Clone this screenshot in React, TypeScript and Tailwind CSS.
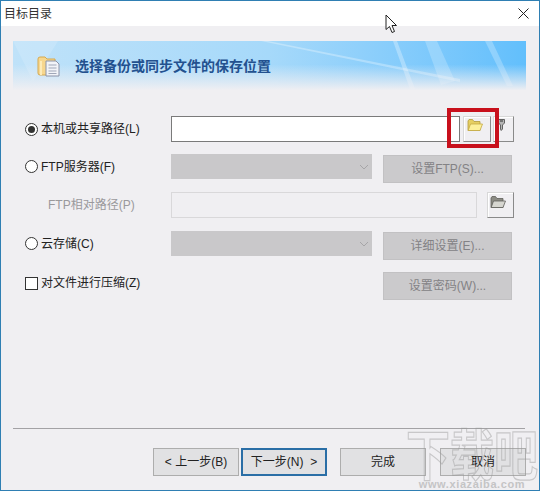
import React from "react";

const font = { fontFamily: '"Liberation Sans", "Noto Sans CJK SC", sans-serif' };

const FolderIcon = ({ gray }: { gray?: boolean }) => (
  <svg width="16" height="14" viewBox="0 0 16 14">
    <path d="M1 3 L1 12.5 L13 12.5 L13 3.5 L7 3.5 L5.5 1.5 L2 1.5 Z" fill={gray ? "#8c8c84" : "#e6cf62"} stroke={gray ? "#5f5f5a" : "#b39a3c"} strokeWidth="0.8" />
    <path d="M1.2 12.5 L3.5 6 L15.5 6 L13 12.5 Z" fill={gray ? "#d6d6d0" : "#fdf09a"} stroke={gray ? "#5f5f5a" : "#c4a945"} strokeWidth="0.8" />
  </svg>
);

const KeyIcon = () => (
  <svg width="7" height="12" viewBox="0 0 7 12">
    <path d="M0.5 0.5 L6.5 0.5 L6.5 4 L4.5 6 L4.5 10 L3.2 11.5 L2.5 10 L2.5 6 L0.5 4 Z" fill="#b5b5b5" stroke="#555" strokeWidth="0.9" />
    <path d="M2 2 L5 2" stroke="#333" strokeWidth="1" />
  </svg>
);

const Radio = ({ checked }: { checked?: boolean }) => (
  <span className="w-[13px] h-[13px] rounded-full border border-[#333] bg-white flex items-center justify-center shrink-0">
    {checked && <span className="w-[7px] h-[7px] rounded-full bg-[#333]" />}
  </span>
);

const ToolButton = ({ children, className = "" }: { children: React.ReactNode; className?: string }) => (
  <div className={`h-[26px] flex items-start justify-start bg-[#f0eff2] border border-[#d8d8d8] border-r-[#8a8a8a] border-b-[#8a8a8a] shadow-[inset_1px_1px_0_#ffffff] ${className}`}>
    {children}
  </div>
);

const Combo = () => (
  <div className="w-[201px] h-[25px] bg-[#c9c8ca] flex items-center justify-end pr-[3px]">
    <svg width="10" height="6" viewBox="0 0 10 6">
      <path d="M1 1 L5 5 L9 1" fill="none" stroke="#a6a5a7" strokeWidth="1" />
    </svg>
  </div>
);

const DisabledButton = ({ label, className = "" }: { label: string; className?: string }) => (
  <div className={`w-[129px] h-[28px] bg-[#cbcacc] border border-[#c2c1c3] text-[#838285] text-[12px] flex items-center justify-center ${className}`}>
    {label}
  </div>
);

const FooterButton = ({ label, focus }: { label: string; focus?: boolean }) => (
  <div
    className={`h-[28px] w-[86px] flex items-center justify-center whitespace-pre text-[12px] text-[#222] bg-[#e1e1e3] ${
      focus ? "border-2 border-[#2a6ea6]" : "border border-[#adadad]"
    }`}
  >
    {label}
  </div>
);

export default function App() {
  return (
    <div style={font} className="relative w-[540px] h-[491px] overflow-hidden bg-[#f0eff2] border border-[#2f7fb3] flex flex-col text-[#222]">
      {/* title bar */}
      <div className="h-[25px] shrink-0 bg-white flex items-center justify-between pl-[3px] pr-[10px] text-[12px]">
        <span className="text-[#333]">目标目录</span>
        <svg width="11" height="11" viewBox="0 0 11 11">
          <path d="M0.5 0.5 L10.5 10.5 M10.5 0.5 L0.5 10.5" stroke="#222" strokeWidth="1" />
        </svg>
      </div>

      {/* banner */}
      <div className="relative mt-[15px] mx-[12px] w-[513px] h-[52px] shrink-0 overflow-hidden bg-gradient-to-r from-[#bfe2f9] via-[#a6d9fa] to-[#62bffc] flex items-center pl-[24px] pb-[2px]">
        <svg className="absolute inset-0" width="513" height="52" viewBox="0 0 513 52">
          <path d="M0 0 L45 0 L20 40 Z" fill="#ffffff" opacity="0.15" />
          <path d="M255 0 L447 38 L447 41 L248 0 Z" fill="#ffffff" opacity="0.3" />
          <path d="M380 0 L384 0 L402 48 L397 48 Z" fill="#ffffff" opacity="0.3" />
          <path d="M412 0 L424 0 L442 40 L428 44 Z" fill="#ffffff" opacity="0.22" />
          <path d="M472 0 L479 0 L500 45 L494 45 Z" fill="#ffffff" opacity="0.25" />
        </svg>
        <div className="absolute inset-0 bg-gradient-to-b from-transparent from-45% to-[#f0eff2] to-95%" />
        <svg className="relative" width="23" height="22" viewBox="0 0 23 22">
          <path d="M1 4 Q1 2 3 2 L8 2 L10 4 L18 4 L18 20 L3 20 Q1 20 1 18 Z" fill="#f7d78e" stroke="#d6a94f" strokeWidth="1" />
          <path d="M4 6 L4 20" stroke="#fdebb8" strokeWidth="2" />
          <path d="M9 6 L19 6 L22 9 L22 21 L9 21 Z" fill="#f2f4f8" stroke="#8b93a8" strokeWidth="1" />
          <path d="M11.5 10 L19.5 10 M11.5 13 L19.5 13 M11.5 16 L19.5 16 M11.5 18.5 L19.5 18.5" stroke="#a0a7b8" strokeWidth="1" />
        </svg>
        <span className="relative ml-[15px] text-[14px] font-bold text-[#23518f]">选择备份或同步文件的保存位置</span>
      </div>

      {/* form */}
      <div className="mt-[23px] ml-[24px] flex flex-col">
        <div className="flex items-center h-[26px]">
          <label className="w-[146px] flex items-center gap-[3px] text-[12px]">
            <Radio checked />
            本机或共享路径(L)
          </label>
          <div className="w-[289px] h-[26px] bg-white border border-[#7a7a7a]" />
          <ToolButton className="w-[28px] ml-[3px] pl-[3px] pt-[1px]"><FolderIcon /></ToolButton>
          <ToolButton className="w-[21px] ml-[2px] pl-[4px] pt-[2px]"><KeyIcon /></ToolButton>
        </div>

        <div className="flex items-start h-[29px] mt-[12px]">
          <label className="w-[146px] h-[25px] flex items-center gap-[3px] text-[12px]">
            <Radio />
            FTP服务器(F)
          </label>
          <Combo />
          <DisabledButton label="设置FTP(S)..." className="ml-[11px] mt-[1px]" />
        </div>

        <div className="flex items-center h-[26px] mt-[9px]">
          <span className="w-[146px] pl-[23px] text-[12px] text-[#9a999c]">FTP相对路径(P)</span>
          <div className="w-[306px] h-[26px] bg-[#f0eff2] border border-[#d9d8da]" />
          <ToolButton className="w-[27px] ml-[10px] pl-[2px] pt-[2px]"><FolderIcon gray /></ToolButton>
        </div>

        <div className="flex items-start h-[29px] mt-[13px]">
          <label className="w-[146px] h-[25px] flex items-center gap-[3px] text-[12px]">
            <Radio />
            云存储(C)
          </label>
          <Combo />
          <DisabledButton label="详细设置(E)..." className="ml-[11px] mt-[1px]" />
        </div>

        <div className="flex items-start h-[28px] mt-[12px]">
          <label className="w-[347px] h-[22px] flex items-center gap-[3px] text-[12px]">
            <span className="w-[13px] h-[13px] border border-[#333] bg-white shrink-0" />
            对文件进行压缩(Z)
          </label>
          <DisabledButton label="设置密码(W)..." className="ml-[11px]" />
        </div>
      </div>

      {/* footer */}
      <div className="mt-auto mx-[12px] w-[512px] border-t border-[#a3a2a5]" />
      <div className="h-[61px] shrink-0 flex items-start pt-[19px] pl-[152px] text-[12px]">
        <FooterButton label="< 上一步(B)" />
        <div className="ml-[2px]"><FooterButton label="下一步(N)  >" focus /></div>
        <div className="ml-[13px]"><FooterButton label="完成" /></div>
        <div className="ml-[14px]"><FooterButton label="取消" /></div>
      </div>

      {/* annotation */}
      <div className="absolute left-[446px] top-[107px] w-[52px] h-[40px] border-[4px] border-[#c8101c]" />

      {/* mouse pointer */}
      <svg className="absolute left-[384px] top-[13px]" width="13" height="20" viewBox="0 0 13 20">
        <path d="M1 1 L1 15.5 L4.5 12.5 L7 18.5 L9.5 17.5 L7 11.5 L11.5 11.5 Z" fill="#ffffff" stroke="#222" strokeWidth="1" />
      </svg>

      {/* watermark */}
      <div className="absolute left-[404px] top-[428px] w-[134px] h-[61px] flex flex-col items-center leading-none pointer-events-none">
        <span className="text-[44px] font-bold text-transparent [-webkit-text-stroke:1px_rgba(150,150,150,0.45)] scale-y-125 origin-top">下载吧</span>
        <span className="text-[11px] font-bold text-[#a8a8a8] opacity-60 tracking-[0.6px] mt-[6px]">www.xiazaiba.com</span>
      </div>
    </div>
  );
}
